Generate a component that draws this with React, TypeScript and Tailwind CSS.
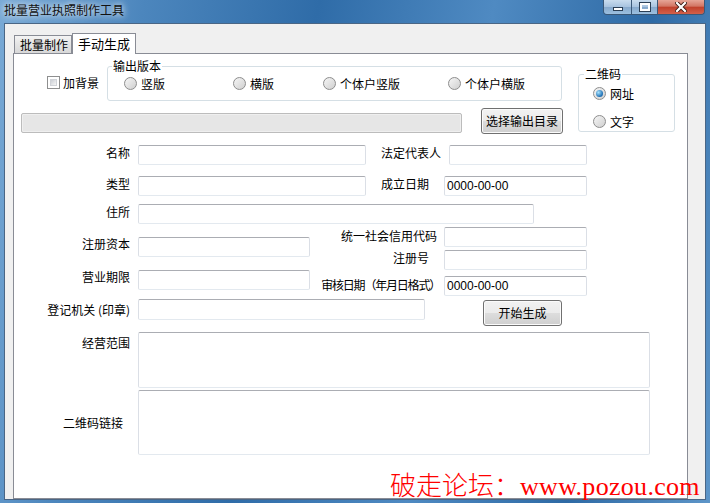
import type { ReactNode } from 'react'

const field = 'bg-white border border-[#dbdfe6] border-t-[#abadb3] border-b-[#e3e9ef] rounded-[2px]'

function Radio({ label, checked }: { label: string; checked?: boolean }) {
  return (
    <div className="flex items-center gap-[4px]">
      <span className="w-[13px] h-[13px] rounded-full border border-[#8d8d8d] bg-[linear-gradient(135deg,#f6f6f6,#cfcfcf)] flex items-center justify-center shrink-0">
        {checked && <span className="w-[7px] h-[7px] rounded-full bg-[radial-gradient(circle_at_35%_35%,#a9e4ff,#1b6db3_70%,#0d4a86)]" />}
      </span>
      <span className="leading-[13px] whitespace-nowrap">{label}</span>
    </div>
  )
}

function WinButton({ children, className }: { children: ReactNode; className: string }) {
  return (
    <div className={`flex items-center justify-center rounded-[3px] border border-[#707070] bg-[linear-gradient(#f2f2f2_0%,#ebebeb_50%,#dddddd_50%,#cfcfcf_100%)] shadow-[inset_0_0_0_1px_#fbfbfb] leading-[14px] ${className}`}>
      {children}
    </div>
  )
}

function Label({ text, w, className = '' }: { text: string; w: string; className?: string }) {
  return <div className={`${w} text-right leading-[16px] shrink-0 whitespace-nowrap ${className}`}>{text}</div>
}

function DateBox({ w, ml }: { w: string; ml: string }) {
  return (
    <div className={`${field} ${w} ${ml} h-[20px] pl-[2px] leading-[18px] font-['Liberation_Sans',sans-serif] text-[12px]`}>
      0000-00-00
    </div>
  )
}

export default function App() {
  return (
    <div className="w-[710px] h-[503px] relative overflow-hidden flex flex-col text-[12px] text-black font-['Noto_Sans_CJK_SC','Liberation_Sans',sans-serif] bg-[linear-gradient(100deg,#79aad6_0%,#4c86bd_18%,#2f6ca8_40%,#4f8ac2_62%,#2e6aa5_82%,#5d95c8_100%)]">
      {/* title bar */}
      <div className="h-[23px] flex items-start shrink-0">
        <span className="pl-[4px] leading-[20px] text-[#111] [text-shadow:0_0_6px_rgba(255,255,255,0.9),0_0_10px_rgba(255,255,255,0.6)]">
          批量营业执照制作工具
        </span>
        <div className="ml-auto mr-[5px] flex h-[15px] border border-t-0 border-[#3a5878] rounded-b-[4px] overflow-hidden">
          <div className="w-[28px] flex items-end justify-center pb-[3px] bg-[linear-gradient(#c9dcee,#a7c3df_50%,#87a9cc_51%,#9cc0e0)] border-r border-[#3a5878]">
            <span className="w-[10px] h-[4px] bg-white border border-[#2b3f55]" />
          </div>
          <div className="w-[26px] flex items-center justify-center bg-[linear-gradient(#c9dcee,#a7c3df_50%,#87a9cc_51%,#9cc0e0)] border-r border-[#3a5878]">
            <span className="w-[10px] h-[8px] border-[2px] border-white outline outline-1 outline-[#2b3f55]" />
          </div>
          <div className="w-[46px] flex items-center justify-center bg-[linear-gradient(#e6a597,#d27563_45%,#c0402b_50%,#d2604a)]">
            <svg width="12" height="10" viewBox="0 0 12 10">
              <path d="M2 1 L10 9 M10 1 L2 9" stroke="#3d1a14" strokeWidth="4" strokeLinecap="square" />
              <path d="M2 1 L10 9 M10 1 L2 9" stroke="#fff" strokeWidth="2.2" strokeLinecap="square" />
            </svg>
          </div>
        </div>
      </div>

      {/* client area */}
      <div className="mx-[4px] h-[477px] border border-[#4a6685] bg-[#f0f0f0] flex flex-col">
        <div className="flex items-end h-[20px] mt-[9px] pl-[9px]">
          <div className="w-[58px] h-[18px] border border-b-0 border-[#898c95] bg-[linear-gradient(#f4f4f4,#e4e4e4_50%,#d8d8d8)] pl-[5px] leading-[17px]">
            批量制作
          </div>
          <div className="relative z-10 -mb-px w-[64px] h-[21px] border border-b-0 border-[#898c95] bg-white text-center leading-[19px] text-[13px]">
            手动生成
          </div>
        </div>

        <div className="ml-[8px] w-[675px] h-[446px] border border-[#898c95] bg-white pl-[7px] pt-[6px]">
          {/* top section */}
          <div className="flex items-start">
            <div className="w-[542px]">
              <div className="flex items-start h-[41px]">
                <div className="ml-[26px] mt-[16px] flex items-center gap-[3px] shrink-0">
                  <span className="w-[13px] h-[13px] border border-[#8e8f8f] bg-white p-[2px] shrink-0">
                    <span className="block w-full h-full bg-[linear-gradient(135deg,#cbcfd5,#f6f6f6)] border border-[#d0d3d8]" />
                  </span>
                  <span className="leading-[13px] whitespace-nowrap">加背景</span>
                </div>
                <fieldset className="ml-[8px] w-[455px] h-[41px] border border-[#d5dfe5] rounded-[3px] shrink-0">
                  <legend className="ml-[4px] px-[1px] leading-[12px]">输出版本</legend>
                  <div className="flex items-center mt-[5px] pl-[16px]">
                    <div className="w-[109px]"><Radio label="竖版" /></div>
                    <div className="w-[90px]"><Radio label="横版" /></div>
                    <div className="w-[125px]"><Radio label="个体户竖版" /></div>
                    <Radio label="个体户横版" />
                  </div>
                </fieldset>
              </div>
              <div className="flex items-start mt-[7px]">
                <div className="mt-[5px] w-[441px] h-[20px] rounded-[2px] border border-[#bcbcbc] bg-[#e6e6e6] shadow-[inset_0_0_0_1px_#efefef]" />
                <WinButton className="ml-[19px] w-[82px] h-[26px]">选择输出目录</WinButton>
              </div>
            </div>
            <fieldset className="ml-[15px] mt-[8px] w-[97px] h-[64px] border border-[#d5dfe5] rounded-[3px]">
              <legend className="ml-[5px] px-[1px] leading-[12px]">二维码</legend>
              <div className="pl-[14px] mt-[7px]">
                <Radio label="网址" checked />
                <div className="mt-[15px]"><Radio label="文字" /></div>
              </div>
            </fieldset>
          </div>

          {/* form rows */}
          <div className="flex items-start mt-[11px]">
            <Label text="名称" w="w-[109px]" />
            <div className={`${field} ml-[8px] w-[228px] h-[20px]`} />
            <Label text="法定代表人" w="w-[75px]" />
            <div className={`${field} ml-[8px] w-[138px] h-[20px]`} />
          </div>
          <div className="flex items-start mt-[11px]">
            <Label text="类型" w="w-[109px]" />
            <div className={`${field} ml-[8px] w-[228px] h-[20px]`} />
            <Label text="成立日期" w="w-[63px]" />
            <DateBox w="w-[143px]" ml="ml-[15px]" />
          </div>
          <div className="flex items-start mt-[8px]">
            <Label text="住所" w="w-[109px]" />
            <div className={`${field} ml-[8px] w-[396px] h-[20px]`} />
          </div>

          <div className="flex items-start">
            <div className="w-[289px]">
              <div className="flex items-start mt-[13px]">
                <Label text="注册资本" w="w-[109px]" className="mt-[-1px]" />
                <div className={`${field} ml-[8px] w-[172px] h-[20px]`} />
              </div>
              <div className="flex items-start mt-[13px]">
                <Label text="营业期限" w="w-[109px]" className="mt-[-1px]" />
                <div className={`${field} ml-[8px] w-[172px] h-[20px]`} />
              </div>
            </div>
            <div>
              <div className="flex items-start mt-[3px]">
                <Label text="统一社会信用代码" w="w-[127px]" className="mt-[1px]" />
                <div className={`${field} ml-[7px] w-[143px] h-[20px]`} />
              </div>
              <div className="flex items-start mt-[3px]">
                <Label text="注册号" w="w-[119px]" />
                <div className={`${field} ml-[15px] w-[143px] h-[20px]`} />
              </div>
              <div className="flex items-start mt-[6px]">
                <Label text="审核日期（年月日格式）" w="w-[130px]" className="mt-[1px] tracking-[-1.2px]" />
                <DateBox w="w-[143px]" ml="ml-[4px]" />
              </div>
            </div>
          </div>

          <div className="flex items-start mt-[3px]">
            <Label text="登记机关 (印章)" w="w-[109px]" className="pt-[3px]" />
            <div className={`${field} ml-[8px] w-[287px] h-[21px]`} />
            <WinButton className="ml-[58px] mt-[1px] w-[79px] h-[26px]">开始生成</WinButton>
          </div>

          <div className="flex items-start mt-[6px]">
            <Label text="经营范围" w="w-[109px]" className="pt-[3px]" />
            <div className={`${field} ml-[8px] w-[512px] h-[56px]`} />
          </div>
          <div className="flex items-center mt-[2px]">
            <Label text="二维码链接" w="w-[109px]" className="pr-[7px]" />
            <div className={`${field} ml-[8px] w-[512px] h-[65px]`} />
          </div>
        </div>
      </div>

      {/* watermark over the window */}
      <div className="absolute left-[390px] top-[470px] text-[26px] leading-[28px] font-light text-[#ff0000] whitespace-nowrap">
        破走论坛：<span className="font-['Liberation_Serif',serif] font-normal tracking-[0.3px]">www.pozou.com</span>
      </div>
    </div>
  )
}
